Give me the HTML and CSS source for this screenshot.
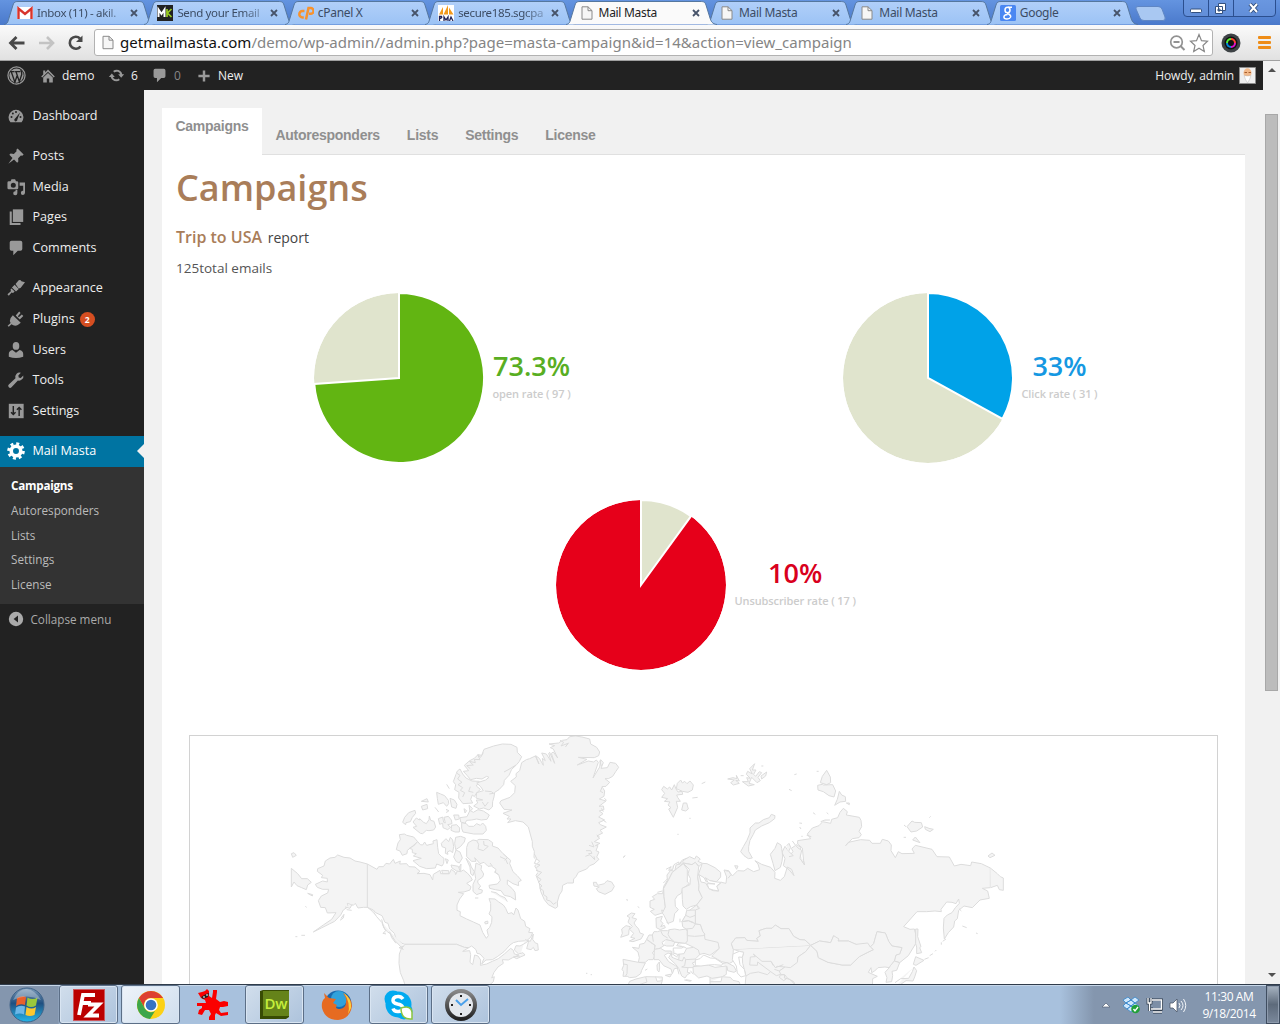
FILE: index.html
```html
<!DOCTYPE html>
<html lang="en">
<head>
<meta charset="utf-8">
<title>Mail Masta</title>
<link rel="stylesheet" href="styles.css">
</head>
<body>
<svg width="0" height="0" class="defs">
  <defs>
    <linearGradient id="tabBlue" x1="0" y1="0" x2="0" y2="1"><stop offset="0" stop-color="#b1cff9"/><stop offset="1" stop-color="#9cc3f5"/></linearGradient>
    <linearGradient id="orb" x1="0" y1="0" x2="0" y2="1"><stop offset="0" stop-color="#7d9bb8"/><stop offset=".45" stop-color="#1f4f80"/><stop offset="1" stop-color="#25b7ea"/></linearGradient>
    <linearGradient id="rim" x1="0" y1="0" x2="0" y2="1"><stop offset="0" stop-color="#888"/><stop offset="1" stop-color="#222"/></linearGradient>
    <symbol id="tab" viewBox="0 0 152 25"><path d="M0 24.5C4 24 4 21 5 18L9 5C10 2 11 1.500 14 1.500H134C138 1.500 139 2 140 5L144 18C145 21 146 24 151 24.500" stroke="#55779f" stroke-width="1"/></symbol>
    <symbol id="page" viewBox="0 0 12 14"><path d="M1 .8H7L11 4.600V13.200H1Z" fill="#f6f6f6" stroke="#8a8a8a"/><path d="M7 .8V4.700H11" fill="none" stroke="#8a8a8a"/></symbol>
    <symbol id="x" viewBox="0 0 8 8"><path d="M1 1L7 7M7 1L1 7" stroke="#47546a" stroke-width="1.800"/></symbol>
    <symbol id="bubble" viewBox="0 0 20 20"><path d="M5 2h10q2 0 2 2v7q0 2-2 2h-3l-5 5v-5H5q-2 0-2-2V4q0-2 2-2z"/></symbol>
  </defs>
</svg>

<header class="tabstrip">
  <div class="tabs">
    <div class="tab"><svg class="tab-bg"><use href="#tab"/></svg>
      <svg class="fav" viewBox="0 0 16 16"><path fill="#fff" d="M0 2h16v12H0z"/><path d="M1.500 14V3.500L8 9l6.500-5.500V14" fill="none" stroke="#d8342c" stroke-width="2.400"/></svg>
      <span class="name fade">Inbox (11) - akil.</span><svg class="close"><use href="#x"/></svg></div>
    <div class="tab"><svg class="tab-bg"><use href="#tab"/></svg>
      <svg class="fav" viewBox="0 0 16 16"><path fill="#222" d="M0 0h16v16H0z"/><path d="M1.500 12V4.500L4.500 9l3-4.500V12" fill="none" stroke="#fff" stroke-width="2"/><path d="M10 4v8M14.500 4l-4 4 4 4" fill="none" stroke="#9c2" stroke-width="1.700"/></svg>
      <span class="name fade">Send your Email</span><svg class="close"><use href="#x"/></svg></div>
    <div class="tab"><svg class="tab-bg"><use href="#tab"/></svg>
      <svg class="fav" viewBox="0 0 16 16"><path d="M6.500 6H4.500a3.200 3.200 0 0 0 0 6.400h1.300M8 14.500L10.500 3h2.200a2.700 2.700 0 0 1 0 5.800H11" fill="none" stroke="#f7922d" stroke-width="2.500"/></svg>
      <span class="name">cPanel X</span><svg class="close"><use href="#x"/></svg></div>
    <div class="tab"><svg class="tab-bg"><use href="#tab"/></svg>
      <svg class="fav" viewBox="0 0 16 16"><path fill="#fff" d="M0 0h16v16H0z"/><path d="M1 9.500L5 2v7.500zM5.500 9.500L10 0v9.500zM11 9.500V2.500l4.500 7z" fill="#f39a1c"/><path d="M1.500 16v-4.500h2q1 1.500-2 2.200M6 16v-4l2 3 2-3v4M11.500 16l1.500-4 2 4" fill="none" stroke="#225" stroke-width="1.300"/></svg>
      <span class="name fade">secure185.sgcpa</span><svg class="close"><use href="#x"/></svg></div>
    <div class="tab active"><svg class="tab-bg"><use href="#tab"/></svg><svg class="fav doc"><use href="#page"/></svg>
      <span class="name">Mail Masta</span><svg class="close"><use href="#x"/></svg></div>
    <div class="tab"><svg class="tab-bg"><use href="#tab"/></svg><svg class="fav doc"><use href="#page"/></svg>
      <span class="name">Mail Masta</span><svg class="close"><use href="#x"/></svg></div>
    <div class="tab"><svg class="tab-bg"><use href="#tab"/></svg><svg class="fav doc"><use href="#page"/></svg>
      <span class="name">Mail Masta</span><svg class="close"><use href="#x"/></svg></div>
    <div class="tab"><svg class="tab-bg"><use href="#tab"/></svg>
      <svg class="fav" viewBox="0 0 16 16"><rect width="16" height="16" rx="1.500" fill="#4a87f2"/><ellipse cx="7.500" cy="5" rx="2.500" ry="2.800" fill="none" stroke="#fff" stroke-width="1.500"/><path d="M8 2.200h4M7 8.500q3 .5 3.500 2.500M7.500 9.500C2.500 10 3 14 7 14s5-3.500 2-4.500" fill="none" stroke="#fff" stroke-width="1.400"/></svg>
      <span class="name">Google</span><svg class="close"><use href="#x"/></svg></div>
  </div>
  <svg class="newtab" viewBox="0 0 34 18"><path d="M4 1.500H24Q27 1.500 28 4L31 12Q32 15.500 29 15.500H10Q7 15.500 6 13L2 4Q1 1.500 4 1.500Z" fill="#a9c8f2" stroke="#5f86c4"/></svg>
  <svg class="winctl" viewBox="0 0 94 18"><path d="M.5 0V13Q.5 16.500 4 16.500H89Q92.500 16.500 92.500 13V0M25.500 0V16M50.500 0V16" fill="#6f9ae0" fill-opacity=".5" stroke="#2b4f8f"/><rect x="7.500" y="9" width="11" height="3.500" rx="1" fill="#fff" stroke="#33507f"/><path d="M35.500 3.500h7v7h-7zM32.500 6.500h7v7h-7zM35 9h2v2h-2z" fill="#fff" stroke="#33507f"/><path d="M67 4L74 12M74 4L67 12" stroke="#33507f" stroke-width="4"/><path d="M67 4L74 12M74 4L67 12" stroke="#fff" stroke-width="2"/></svg>
</header>

<div class="toolbar">
  <svg class="nav" viewBox="0 0 90 20"><path d="M17.500 10H4M9.500 4L3.500 10L9.500 16" fill="none" stroke="#484848" stroke-width="2.800"/><path d="M32 10H45M40 4L46 10L40 16" fill="none" stroke="#c3c3c3" stroke-width="2.600"/><path d="M73.500 13.500A6 6 0 1 1 73 5.500" fill="none" stroke="#484848" stroke-width="2.600"/><path d="M75.500 2.500V9H69Z" fill="#484848"/></svg>
  <div class="omnibox">
    <svg class="page-icon"><use href="#page"/></svg>
    <span class="url"><b>getmailmasta.com</b>/demo/wp-admin//admin.php?page=masta-campaign&amp;id=14&amp;action=view_campaign</span>
    <svg class="omni-icons" viewBox="0 0 40 20"><circle cx="7.500" cy="9" r="5.800" fill="none" stroke="#929292" stroke-width="1.700"/><path d="M4.500 9h6M11.500 13l4 4" stroke="#929292" stroke-width="2"/><path d="M30 1.500L32.500 7.700L38.500 8.200L34 12.500L35.300 18.500L30 15.200L24.700 18.500L26 12.500L21.500 8.200L27.500 7.700Z" fill="#fff" stroke="#888" stroke-width="1.200"/></svg>
  </div>
  <svg class="ext" viewBox="0 0 20 20"><circle cx="10" cy="10" r="9.500" fill="#3d4245"/><circle cx="10" cy="10" r="6.500" fill="#111"/><path d="M10 10V5A5 5 0 0 1 15 10Z" fill="#f43"/><path d="M10 10H15A5 5 0 0 1 10 15Z" fill="#d1c"/><path d="M10 10H5A5 5 0 0 1 10 5Z" fill="#5e3"/><path d="M10 10V15A5 5 0 0 1 5 10Z" fill="#08d"/><circle cx="10" cy="10" r="3" fill="#111"/></svg>
  <div class="menu"><i></i><i></i><i></i></div>
</div>

<div class="viewport">
  <div class="page">
    <div class="adminbar">
      <svg class="wp" viewBox="0 0 20 20"><circle cx="10" cy="10" r="9" fill="none" stroke="#999" stroke-width="1.300"/><circle cx="10" cy="10" r="7.500" fill="#999"/><path d="M3 6h5M8.500 6H14M4.500 6l3.800 11L10.500 10.500M9.500 6L13 16.500L15.500 9Q16 6.500 14.500 4" fill="none" stroke="#222" stroke-width="1.400"/></svg>
      <svg class="home" viewBox="0 0 20 20" fill="#999"><path d="M10 2l8.500 8.500-1.300 1.300L10 4.700l-7.200 7.100L1.500 10.500 4 8V3h2.500v2.500zM4 12l6-5.800L16 12v6h-4.500v-5h-3v5H4z"/></svg>
      <span class="t-demo">demo</span>
      <svg class="upd" viewBox="0 0 20 20" fill="#999"><path d="M10.200 3.300c3.200 0 5.800 2.200 6.600 5.100H19l-3.500 4.200L12 8.400h2.300A4.300 4.300 0 0 0 7.500 6.600L6 4.800a6.800 6.800 0 0 1 4.200-1.500zM9.800 16.800c-3.200 0-5.800-2.200-6.600-5.100H1l3.500-4.200L8 11.700H5.700a4.300 4.300 0 0 0 6.800 1.800l1.500 1.800a6.800 6.800 0 0 1-4.200 1.500z"/></svg>
      <span class="t-six">6</span>
      <svg class="com" fill="#999"><use href="#bubble"/></svg>
      <span class="t-zero">0</span>
      <svg class="plus" viewBox="0 0 20 20"><path d="M10 2v16M2 10h16" stroke="#999" stroke-width="3.500"/></svg>
      <span>New</span>
      <span class="howdy">Howdy, admin</span>
      <svg class="avatar" viewBox="0 0 17 17"><path d="M.5.500h16v16H.5z" fill="#eee" stroke="#8c8c8c"/><ellipse cx="8.500" cy="6" rx="4" ry="4.700" fill="#f2b98a"/><path d="M5 8.500Q8.500 9.500 12 8.500L10.500 12.500L8.500 16L6.500 12.500Z" fill="#fff" stroke="#bbb" stroke-width=".5"/><path d="M5.500 5.500h2.500M9.500 5.500H12" stroke="#a65f2f"/></svg>
    </div>
    <div class="body">
      <nav class="side">
        <a class="sep"><svg viewBox="0 0 20 20"><path d="M3.800 17h12.400A8.300 8.300 0 1 0 3.800 17z"/><g fill="#222"><circle cx="5" cy="11" r="1.100"/><circle cx="6.500" cy="7.300" r="1.100"/><circle cx="10" cy="5.500" r="1.100"/><circle cx="15" cy="11" r="1.100"/><path d="M14.500 6l-3 8a1.700 1.700 0 1 1-2.500-1.200z"/></g></svg>Dashboard</a>
        <a><svg viewBox="0 0 20 20"><path d="M10.400 3l1.400-1.400 6.700 6.700L17 9.700l-1.600-.3-3 3 .2 3.600-1.300 1.400-3.500-3.500L1.500 18.600l4.600-6.500-3.500-3.400 1.400-1.400 3.600.4 3-3z"/></svg>Posts</a>
        <a><svg viewBox="0 0 20 20"><path d="M12.500 11V5q0-1.500-1.500-1.500h-1L9 1.500H5L4 3.500H2Q.5 3.500.5 5v6q0 1.500 1.500 1.500h9q1.500 0 1.500-1.500zM7 5.200a2.800 2.800 0 1 1 0 5.600 2.800 2.800 0 0 1 0-5.600z" fill-rule="evenodd"/><path d="M14 5h6v11.500a2.300 2.300 0 1 1-2-2.300V8.500h-4zM11.500 13v4a2.300 2.300 0 1 1-2-2.300V13z"/></svg>Media</a>
        <a><svg viewBox="0 0 20 20"><path d="M6.500 1.500h11.500v14H6.500z"/><path d="M3 4h2.300v12.800H15V19H3z"/></svg>Pages</a>
        <a class="sep"><svg viewBox="0 0 20 20"><use href="#bubble"/></svg>Comments</a>
        <a><svg viewBox="0 0 20 20"><path d="M9.500 5.500L13 1.500q2-1 3 1l4 1-5 6.500-2 .5zM8.500 6.500l4.500 4.500-3 3-4.500-4.500zM5 10.500l3.500 3.500-1.800 1.500-1.700-.5L2 18.500.5 17l3.800-3.500-.3-2z"/></svg>Appearance</a>
        <a><svg viewBox="0 0 20 20"><path d="M13.100 9.400L9.700 6l3.800-4.200 1.600 1.500-3 3.700 1 1L16.500 5l1.600 1.600-3.900 4zM4 9l2.500-3.200 8.800 8.500-3.300 2.500q-4 1.500-7-1L2 18.700.7 17.500 4 14.500Q2.500 12 4 9z"/></svg>Plugins <em>2</em></a>
        <a><svg viewBox="0 0 20 20"><ellipse cx="10" cy="5.500" rx="3.700" ry="4.300"/><path d="M6 10l4 3 4-3q4 1 4 4.500v3q-8 3-16 0v-3Q2 11 6 10z"/></svg>Users</a>
        <a><svg viewBox="0 0 20 20"><path d="M16.700 9.300q-2 2-4.600 1.300L5 18q-1.500 1.500-3 0t0-3l7.400-7q-.7-3 1.300-5T15.400 2L12.600 5l.4 2.300 2.300.4 2.800-2.800q.6 2.500-1.400 4.400z"/></svg>Tools</a>
        <a class="sep"><svg viewBox="0 0 20 20"><path d="M2 2h16.500v16H2z"/><path d="M7 4.500v9M4.500 11.500L7 14l2.500-2.500M13.500 15.500V6M11 8.500L13.500 6 16 8.500" stroke="#222" stroke-width="1.600" fill="none"/></svg>Settings</a>
        <a class="current"><svg viewBox="0 0 20 20"><circle cx="10" cy="10" r="5.300" fill="none" stroke="#fff" stroke-width="4"/><circle cx="10" cy="10" r="8.300" fill="none" stroke="#fff" stroke-width="3" stroke-dasharray="3.300 3.218"/></svg>Mail Masta</a>
        <div class="sub"><b>Campaigns</b><span>Autoresponders</span><span>Lists</span><span>Settings</span><span>License</span></div>
        <div class="collapse"><svg viewBox="0 0 20 20"><circle cx="10" cy="10" r="9"/><path d="M12.500 5.500v9L7 10z" fill="#222"/></svg>Collapse menu</div>
      </nav>
      <main>
        <div class="subtabs"><span class="on">Campaigns</span><span>Autoresponders</span><span>Lists</span><span>Settings</span><span>License</span></div>
        <section class="panel">
          <h1>Campaigns</h1>
          <p class="trip"><b>Trip to USA</b> report</p>
          <p class="total">125total emails</p>
          <div class="charts">
            <div class="chart green"><svg viewBox="-86 -86 172 172"><circle r="85" fill="#e0e4cd"/><path d="M0 0V-85A85 85 0 1 1 -84.700 6Z" fill="#62b512" stroke="#fff" stroke-width="2"/><circle r="85.500" fill="none" stroke="#fff"/></svg><div><strong>73.3%</strong><small>open rate ( 97 )</small></div></div>
            <div class="chart blue"><svg viewBox="-86 -86 172 172"><circle r="85" fill="#e0e4cd"/><path d="M0 0V-85A85 85 0 0 1 74.500 40.900Z" fill="#00a2e8" stroke="#fff" stroke-width="2"/><circle r="85.500" fill="none" stroke="#fff"/></svg><div><strong>33%</strong><small>Click rate ( 31 )</small></div></div>
          </div>
          <div class="charts second">
            <div class="chart red"><svg viewBox="-86 -86 172 172"><circle r="85" fill="#e6001a"/><path d="M0 0V-85A85 85 0 0 1 50 -68.800Z" fill="#e0e4cd" stroke="#fff" stroke-width="2"/><circle r="85.500" fill="none" stroke="#fff"/></svg><div><strong>10%</strong><small>Unsubscriber rate ( 17 )</small></div></div>
          </div>
          <div class="map">
            <svg width="1027" height="248" viewBox="0 0 1027 248">
              <g transform="translate(90 -6) scale(.33333)">
                <!-- Alaska, Canada, United States -->
                <path d="M262 402L240 396L225 393L210 384L192 382L173 375L165 382L150 384L136 393L132 408L113 416L112 424L128 436L124 443L142 445L142 456L128 453L106 463L112 472L128 478L146 478L143 489L124 498L115 512L122 532L136 533L142 549L168 548L155 568L130 585L100 606L124 594L148 582L164 574L182 555L190 540L205 530L202 520L220 526L226 520L234 534L250 532L262 532"/>
                <path d="M262 402L291 418L296 410L310 410L318 400L329 402L340 388L345 400L361 393L359 402L380 401L387 410L405 411L420 424L411 431L432 430L450 434L458 450L460 433L480 421L482 431L508 431L514 418L525 426L527 434L536 415L543 402L542 425L550 420L563 430L573 442L577 450L560 460L573 470L570 480L552 486L535 487L551 491L539 507L531 525L531 541L541 545L540 557L560 567L580 576L600 585L608 607L619 625L625 617L621 600L629 592L635 577L636 560L627 552L632 540L632 520L627 506L645 507L655 515L670 525L677 535L684 551L696 548L701 555L708 534L714 540L722 566L734 574L737 589L750 596L746 607L758 608L752 622L740 632L715 634L700 638L690 645L672 665L652 680L637 689L618 690L605 702L612 685L600 672L591 670L588 659L575 648L566 653L553 652L530 643L375 643L366 640L348 626L343 610L329 597L324 580L315 577L306 557L287 548L280 540L262 532Z"/>
                <path d="M375 643H530L553 652L566 653L548 664L569 662L572 674L570 697L578 704L584 675L594 678L602 690L601 706L620 702L637 694L655 686L673 672L692 655L700 661L703 672L717 675L698 683L685 690L667 689L670 700L654 711L642 727L635 744L643 740L640 755L630 764L620 780H380L371 752L361 728L357 700L358 672L364 656Z"/>
                <path d="M262 532L280 545L290 560L306 578L312 595L322 605L332 612L345 632L370 658L357 653L372 648M305 568L310 588L317 602L309 610L318 612M329 605L335 623L348 640M183 565L192 553L190 564L180 571M195 531L210 535L216 523M200 539L215 541"/>
                <path d="M735 629L751 634L760 612L758 628L766 639L773 641L775 660L765 662L760 652L753 659L740 656L743 645L746 632L735 640L720 648L708 647L703 660L716 672L729 668L735 675L710 686L700 681L720 678"/>
                <path d="M34 415L53 431L65 446L82 446L94 457L83 465L79 479L65 473L51 467L42 456L34 471ZM34 371L42 368L49 376L38 382ZM83 490L98 494L97 498ZM46 620H52M64 616H75M76 529L80 532"/>
                <!-- Arctic archipelago -->
                <path d="M358 314L373 312L380 316L401 321L413 335L396 350L382 361L381 371L367 376L360 363L349 359L354 339L361 329Z"/>
                <path d="M413 335L421 344L428 345L434 336L440 346L460 341L459 333L471 329L473 352L476 371L484 379L492 385L491 400L486 408L470 402L466 414L440 416L419 409L399 392L424 385L400 378L409 371L397 368L397 358L388 355L401 348Z"/>
                <path d="M484 340L498 326L506 335L511 322L518 330L521 350L518 368L510 362L502 366L504 373L496 370L497 354L486 350ZM527 322L542 319L556 324L553 336L541 350L527 359L524 340Z"/>
                <path d="M528 360L540 366L547 384L538 399L529 395L521 381ZM496 386L505 390L501 401ZM485 421L506 422L507 431H488ZM513 405L535 409L541 425L530 423L516 414Z"/>
                <path d="M405 241L407 250L397 262L391 275L378 278L377 284L368 277L374 262L386 248ZM399 276L409 264L418 270L419 266L431 277L439 281L447 269L448 258L452 271L462 274L467 291L461 300L447 302L439 301L428 311L421 310L399 292L410 289Z"/>
                <path d="M470 187L482 192L494 197L505 211L506 221L500 229L490 218L475 223L472 205ZM510 205L523 210L531 223L528 235L515 231ZM424 214L441 206L445 216ZM424 229L441 223L443 236L428 240ZM500 163L508 176M465 232L476 246M498 238L507 242L499 248"/>
                <path d="M475 266L488 261L491 277L496 279L492 262L505 259L514 270L516 281L503 284L512 292L503 299L489 293L488 280L479 283ZM515 286L530 284L539 294L538 306H525L513 301ZM521 255H536L538 267L526 270ZM540 263L561 260L570 241L580 247L594 239L610 243L628 255L621 268L604 270L590 267L575 270L560 271L555 280L542 276Z"/>
                <path d="M545 278L559 281L566 289L581 289L590 281L601 286L608 279L617 289L619 301L609 312H581L549 306L545 295ZM552 236L560 242L555 249ZM567 226L578 236L570 244Z"/>
                <path d="M524 144L532 123L540 117L548 132L558 144L576 153L598 154L589 168L601 178L589 190L583 200L577 195L572 208L578 219L549 221L536 204L537 187L524 179L527 164L520 155Z"/>
                <path d="M553 106L569 92L583 85L594 74L605 76L612 58L641 48L667 42L693 43L711 52L712 67L725 80L718 94L710 104L695 118L687 136L673 151L671 164L657 179L644 187L642 201L638 215L637 231L627 240L611 234L598 237L581 228L593 219L589 210L608 210L588 204L590 188L610 182L602 170L590 159L617 150L627 142L620 139L606 147L589 145L572 149L561 136L550 124L566 122Z"/>
                <path d="M565 338L579 330L590 332L597 328L625 329L638 338L637 348L654 354L668 370L692 391L689 401L695 415L699 425L712 437L724 451L715 456L716 467L699 461L682 450L682 463L697 476L705 487L707 510L691 500L673 496L663 482L646 479L629 475L627 466L652 462L661 451L656 434L646 427L648 418L634 408L624 409L612 397L600 401L584 383L588 394L575 394L560 380L560 352Z"/>
                <path d="M558 385L569 397L574 411L583 425L579 437L572 431L570 411ZM588 399L605 407L603 418L611 432L608 441L593 452L594 460L602 468L595 477L607 480L606 488L590 494L579 484L579 463L587 446L584 426ZM585 504H595M614 576L623 573L624 580L616 582ZM590 332L596 343L594 357L610 362L625 349L612 345L611 333M633 485L648 488L660 497L675 503L682 515M637 408L630 399M642 425L655 434"/>
                <!-- Greenland, Iceland -->
                <path d="M659 219L663 212L690 202L704 188L706 167L692 154L709 141L708 131L719 122L725 98L739 89L749 86L766 78L777 102L767 77L778 85L790 106L787 85L796 92L785 69L799 72L813 94L806 70L809 67L824 100L814 70L820 66L833 84L820 57L811 53L824 47L807 42L836 39L847 31L861 29L869 20L887 18L906 21L929 27L932 42L950 52L959 66L956 77L943 83L895 82L921 88L892 105L925 93L941 96L949 90L955 97L939 144L959 111L962 89L970 98L963 115L982 113L990 97L1007 100L1016 112L1007 125L998 139L985 146H975L989 157L978 169L966 170L974 183L972 199L958 207L978 213L957 229L970 228L972 239L958 243L969 251L956 261L974 270L956 278L961 284L979 291L960 301L968 309L951 318L959 325L943 335L960 340L946 347H954L948 362L957 366L950 381L957 388L942 402L929 407L920 417L895 427L888 440L881 447L880 459L862 459L848 466L846 483L838 495L832 516L833 530L826 535L805 524L793 509L782 484L778 461L768 436L775 426L764 408L779 393L762 383L763 364L757 349L757 335L745 291L729 276L706 272L683 278L693 267H681L688 259L669 250L696 240L672 238Z"/>
                <path d="M940 457H949L953 466L973 461L981 452L995 456L1003 469L996 482L975 493L955 485L949 476L958 471L942 468ZM959 92L964 108M967 170L961 184L969 188M973 205L980 211M964 235L970 245M968 270L979 277M950 315L959 321M935 335L942 351L927 346M918 362L932 362L936 370L925 371M916 379L930 374L944 389L942 379M763 372L770 385L763 400L780 405L769 413M768 421L785 427L771 440L783 448L776 458L786 468L779 474L790 482L791 494L801 501L800 510L811 513L820 523L829 517M840 31L851 37L843 48L864 40L857 50L866 38M1030 383L1036 377M1040 510L1043 512M918 730H922M932 734H936"/>
                <path d="M528 128L540 136L533 147L546 157L534 164L548 173L541 181L554 188L548 201M571 170L566 184L580 187M610 68L602 82L593 74L600 89L583 88L586 98L568 94L580 105L560 107L571 116M708 105L687 118L672 126M615 183L634 185L641 190L628 192M607 216L615 229L625 216M660 380L677 388L683 402M670 372L682 383L674 391"/>
              </g>
              <g transform="translate(410 -6) scale(.33333)">
                <!-- Ukraine, Belarus and the steppe -->
                <path d="M246 575L263 545L290 525L330 600L356 640L358 655L330 676L312 670L297 674L281 652L256 640L262 600Z"/>
                <path d="M400 658L632 646L617 665L594 681L590 770H435L438 736L428 700L427 682L431 667L418 664Z"/>
                <!-- British Isles and western Europe -->
                <path d="M94 549L105 551L96 563L110 567L102 579L107 587L116 597L120 609L131 613L123 627L99 635L88 633L105 625L92 622L101 610L89 598L97 589L84 577L89 563L81 558ZM65 597L78 587L91 590L87 600L86 614L62 622L67 610Z"/>
                <path d="M97 652L117 655L119 643L133 640L140 628L152 638L164 645L166 658L157 669L165 677L159 689L145 689L136 697L115 697L118 683L114 666Z"/>
                <path d="M69 688L115 697L136 699L125 721L122 731L108 741L89 743L82 739H69L71 725L66 718L71 706ZM70 702L82 704L81 731L76 739"/>
                <path d="M140 628L147 615H157L162 605L173 605L181 602H203L208 599L224 597L239 600L258 597L262 604V633L256 639L236 639L224 636L198 629L186 637L191 648L175 657L163 658L166 646Z"/>
                <path d="M163 658L182 655L195 663L214 663L215 672L204 669L193 676L206 695L226 707L234 714L223 716L217 731L213 717L191 707L177 689H162ZM196 736L215 732L210 741ZM171 705L178 696L179 714L177 726L172 721ZM135 721L142 717"/>
                <path d="M198 629L213 632L224 636L220 648L200 648L191 645M220 654L246 654L251 650L260 655L281 652L295 660L299 674L287 686L289 694L277 699L287 713H264L262 727L271 729L262 734L255 744L245 738L236 715L227 703L206 683L214 670L229 680L238 673L236 690L247 693L252 681L257 689L254 707L245 711M220 654L219 669L233 673L252 671L260 655M257 689L287 687M245 711L264 713M213 664L216 682L236 690"/>
                <path d="M208 599L204 613L210 624L224 636L256 640L262 633M182 602L188 615L203 624M157 615L160 635M236 639L230 647L251 651"/>
                <path d="M89 754L108 747L137 740L187 741V752L181 770H82ZM137 741L141 756L117 764M167 740L171 754L187 752M257 749L275 752M330 742L341 740H365L391 742L399 751L417 755L421 765V775H330ZM330 755H363L366 741"/>
                <!-- Scandinavia -->
                <path d="M150 513L164 508L157 500L172 491H188L191 469L202 451L201 435L212 421L224 424L228 405L243 401L252 390L269 380L284 387L289 378L301 387L294 394L307 400L297 409L286 397L276 404L250 399L232 415L217 427L206 449L191 475L192 500L196 531L193 543L185 540L187 549L165 556L151 544L163 538L150 532Z"/>
                <path d="M250 401L262 418V456L268 461L249 475L244 490L232 497L225 509L226 529L235 539L224 551L220 574L204 580L192 556L187 549L196 531L192 500L191 475L206 449L217 427L232 415Z"/>
                <path d="M246 475L270 464L271 445L264 432L268 418L249 399L276 404L286 397L296 410L293 440L297 466L296 480L307 503L290 525L272 530L259 538L249 528L247 508Z"/>
                <path d="M168 564L187 559L182 573L189 580L182 590L193 586L196 593L181 599L169 593ZM199 576L207 583M198 418L213 410L206 421L218 419L222 404L236 396L237 404L247 390L262 384M190 459L203 446M172 487L187 483M240 566V577"/>
                <path d="M185 179L191 169L202 177L209 171L215 180L223 164L228 177L234 186L246 184L248 193L230 195L233 202L241 214L229 214L233 232L220 262L206 237L213 233L204 225L210 216L193 214L203 206L185 202L194 190ZM232 160L242 150L247 159L254 154L261 161L270 153L280 165L277 180L264 187L247 184L229 176ZM250 219H260L265 237L257 243L245 240ZM268 265H272M305 161L316 156M277 204L293 202M232 313H236M69 382L75 377M79 509H83M113 530L118 533"/>
                <!-- Russia -->
                <path d="M307 400L321 401L345 413L362 427V441L350 455L328 452L319 456L312 443L297 434L303 456L317 459L327 476L339 482L356 483L350 470L364 457L378 460L380 441L372 420L386 422L397 438L413 422L432 423L443 415L461 425L479 419L474 402L465 392L485 403L512 412L525 427L524 445L541 451L553 440L562 411L575 418L582 437L567 419L550 407L555 386L546 367L555 349L572 373L579 365L574 355L590 344L602 352L601 385L612 403L607 354L593 342L593 332L632 326L622 312L637 294L657 287L668 275L692 280L695 268L713 263L720 247L730 235L742 245L739 255L778 262L783 271L785 290L777 304L784 314L777 323L757 326L737 347L745 337L782 329L809 331L816 340H841L847 328L865 333L874 345L873 362L886 383L895 365L906 371L943 370L936 357L946 346L996 358L1011 380L1048 381L1063 408L1083 403L1112 407L1115 396L1144 401L1171 414V473L1147 475L1163 483L1168 505L1140 510L1117 533L1092 528L1076 541L1072 566L1064 573L1061 591L1045 608L1033 627L1030 594L1032 565L1042 555L1056 548L1066 533L1078 520L1076 507L1068 521L1056 517L1040 516L1023 538L1024 545L1005 543L980 545H951L911 590L930 598L943 597L949 620L947 641L925 677L899 698L883 693L888 675L899 672L906 653L876 648L866 634L856 609L831 605L821 641L811 651L768 643L745 633L714 633L701 617L692 638L659 633L632 646L615 630L600 629L581 619L567 596L543 596L526 585L516 595H498L477 602L481 618L470 625L475 634L440 631L435 623L407 624L394 641L400 658L398 695L389 700L365 695L344 683L335 678L358 655L354 637L315 628L313 611L308 604L301 584L286 582L286 540L299 535L290 525L307 503L296 480L297 466L293 440Z"/>
                <path d="M511 373L525 355L532 338L543 345L545 355L548 378L546 394L541 412L525 422L519 400ZM560 347L567 340L572 352L566 364L580 377L567 380M577 333L586 345L594 354L605 361L600 385L614 405L610 391"/>
                <path d="M422 365L430 350L441 331L450 309V294L466 279H477L490 269L508 263L514 253L525 257L524 266L508 278L485 288L466 300L460 313L450 331L446 350V364L457 384L445 386L432 377ZM376 422L386 424L393 434L384 445M404 407L414 408L410 418Z"/>
                <path d="M667 139L680 121L691 141L692 158L680 164L661 158ZM670 165L698 164L707 183L702 201L687 197L670 185L654 180L653 166L667 163ZM718 184L725 195L736 200L737 214L720 216L704 226L712 208ZM739 219H748V224ZM650 124H656M583 134L590 132M567 178L575 182M598 279L606 280M599 291L603 297M604 319H608M639 248L646 253M680 248L685 252M662 275L675 270L690 270M620 316L634 320"/>
                <path d="M383 147L399 143L411 146L409 136L418 153L407 151L418 160L400 165L392 158L403 150ZM427 155L445 155L440 143L451 145L439 133L443 124L457 132L449 116L464 101L457 120L468 120L461 133L467 139L478 125L485 128L474 142L481 152L471 158L455 142L447 160L463 164L445 168ZM483 138L500 126L497 138L485 147ZM484 108H490M422 137H431"/>
                <path d="M921 290L936 273L944 277L964 278L968 291L950 303L933 306ZM912 285L918 290M974 290L987 295L1000 298L990 305L976 298ZM938 330L946 321L960 338ZM911 322H918M988 263L992 259M1164 378L1176 369L1185 376L1170 383ZM1171 414L1192 431L1201 440L1210 444V481L1198 479L1192 466L1172 473"/>
                <path d="M947 597H954L953 620L963 650L959 653L965 668L950 671V651L947 641ZM947 680L972 691L948 706L940 703ZM973 688L986 683M989 677L999 671M1005 664L1009 660M1024 644V637M1028 634L1038 627M1084 543L1077 536M1087 588L1100 593M1128 609L1133 611"/>
                <!-- Eastern Europe and central Asia -->
                <path d="M246 575L265 572L280 577L286 582L301 584L308 604L315 613L309 617L284 619L262 617V600ZM260 541L286 540L286 582L265 572L246 575L257 556Z"/>
                <path d="M257 556L270 562L286 556M246 575L248 590L258 597L278 595L286 582"/>
                <path d="M400 658L394 641L407 624L435 623L440 631L475 634L470 625L481 618L477 602L498 595H516L526 585L543 596L567 596L581 619L600 629L615 630L632 646"/>
                <path d="M451 681L449 705L472 706L473 696L512 725L502 734L475 726L451 730L438 738M451 681L466 680L460 672L486 694H513L526 713L550 704M526 713L532 709L555 711L538 723L523 718M513 694L520 707M512 725L529 737L542 733L538 742L551 752L562 744L581 755M543 735L554 734L553 744L570 748L590 770"/>
                <path d="M279 710L302 707L325 705L345 712L379 708L379 733L367 740L336 745L321 738L296 744L280 729ZM361 702L381 698L402 709L409 723L402 727L383 722L381 709M253 750L272 754M232 714L237 733M271 722L280 733"/>
                <path d="M632 646L651 664L655 683L684 697L726 705L752 705L778 680L820 659L811 651L821 641L831 605L856 609L866 634L876 648L906 653L899 672L888 675L883 693L868 713L855 711L834 713L824 723L815 728L813 713L805 727L832 739L818 746L817 775H590L581 755L562 744L554 734L542 733L538 723L555 711L571 713L592 697L594 681L617 665Z"/>
                <path d="M632 646L659 633L692 638L701 617L717 627L714 633L745 633L768 643L803 639L811 651L820 659L803 667L778 680L752 705L726 705L684 697L655 683L651 664Z"/>
                <path d="M871 707L883 693L899 698L890 721L876 724L878 737L875 755L858 757L861 743L855 727L868 713ZM942 711L950 722L944 741L939 753L918 752L901 764L887 770M885 758L902 746L926 745L937 725L942 711"/>
              </g>
              <g class="water" transform="translate(410 -6) scale(.33333)"><path d="M286 690L300 686L311 675L331 684L345 685L368 700L365 706L343 704L325 705L303 708L286 707ZM399 672L418 664L431 667L427 682L416 681L420 704L433 718L437 737L423 741L412 729L409 708L397 689ZM325 459L316 443L330 452L350 456L364 457L350 468L356 483L340 480L327 476L321 461L345 462Z"/></g>
            </svg>
          </div>
        </section>
      </main>
    </div>
  </div>
  <div class="scroll"><i class="up"></i><i class="thumb"></i><i class="down"></i></div>
</div>

<footer class="taskbar">
  <div class="task start"><svg viewBox="0 0 36 36"><circle cx="18" cy="18" r="17" fill="url(#orb)" stroke="#3e6288"/><path d="M8 11q5-3 9-1l-1 8q-5-2-9 1z" fill="#e8602c"/><path d="M18.500 10.500q5 3 10 0l-1.500 8q-5 3-9.500 0z" fill="#9bc83c"/><path d="M7 20.500q4-3 9-1l-1 8q-4-2-9 0z" fill="#6cb7e8"/><path d="M17.500 20q5 3 9.500 0l-1.500 8q-5 2-9 0z" fill="#fcc82f"/><path d="M4 13Q10 1 18 2T32 13Q18 6 4 13z" fill="#fff" opacity=".3"/></svg></div>
  <div class="task open"><svg viewBox="0 0 32 32"><path d="M0 0h32v32H0z" fill="#b00"/><path d="M.5.500h31v31H.5z" fill="none" stroke="#d8aebb" stroke-dasharray="1 1"/><path d="M6 26L10 6H22M9 14H18M15 15.500H26L15 26.500H26" fill="none" stroke="#fff" stroke-width="3.800"/></svg></div>
  <div class="task open bright"><svg viewBox="-16 -16 32 32"><circle r="14" fill="#fcd116"/><path d="M-12.100-7A14 14 0 0 1 12.100-7H0A7 7 0 0 0-6.100 3.500Z" fill="#dd4031"/><path d="M-12.100-7L-6.100 3.500A7 7 0 0 0 4 6L-1 14A14 14 0 0 1-12.100-7Z" fill="#3da64a"/><circle r="6.800" fill="#fff"/><circle r="5.300" fill="#3872c4"/></svg></div>
  <div class="task"><svg viewBox="0 0 32 32"><path d="M1 4L5 3L8 2L10 0L12 2L12 7L15 9L16 3L16 1H20L20 3L19 10L23 13L27 12L31 13L31 17L26 18L23 18L22 21L24 24L31 23L31 26L24 27L19 24L18 26L18 31L12 31L12 28L14 25L12 21L8 21L5 26L1 25L2 21L5 19L5 17L0 17L0 14L5 14L9 14L8 11L4 9Z" fill="#fb0000"/><path d="M4 8L9 5L12 4L11 8L6 10Z" fill="#222"/><path d="M6 8h2M9 6h2" stroke="#fff"/></svg></div>
  <div class="task open"><svg viewBox="0 0 32 32"><path d="M1 2L4 1H30V28L27 30H1Z" fill="#384c04"/><path d="M4 2h26v25H4z" fill="#65831a"/><text x="17" y="20" text-anchor="middle" class="dw">Dw</text></svg></div>
  <div class="task"><svg viewBox="0 0 32 32"><circle cx="17" cy="15" r="13.500" fill="#1969ae"/><circle cx="18" cy="10" r="8" fill="#30a2dc"/><path d="M3 4L8 9L15 10L12 14L16 16Q13 20 19 20Q25 19 25 13Q26 9 22 4Q31 9 31 17Q29 30 17 31Q4 31 1 19Q0 12 4 9Z" fill="#e66b21"/><path d="M23 4Q31 10 30 19L27 25Q30 14 23 4Z" fill="#fbce3a"/></svg></div>
  <div class="task open"><svg viewBox="0 0 32 32"><circle cx="10" cy="10" r="8.500" fill="#00aaf0"/><circle cx="21" cy="22" r="8.500" fill="#00aaf0"/><circle cx="15.500" cy="15.500" r="13" fill="#00aaf0"/><path d="M20 10Q18 7 14.500 7.500Q10 8 10 11.500Q10 14 14.500 15Q20 16 20 19.500Q19 23 14.500 22.500Q11 22.500 10 19.500" fill="none" stroke="#fff" stroke-width="3.500"/><path d="M18 19Q28 16 29 23V30Q18 31 18 19Z" fill="#fff" stroke="#8bc53f" stroke-width="1.500"/></svg></div>
  <div class="task open"><svg viewBox="-16 -16 32 32"><circle r="14" fill="#e3e7ec" stroke="url(#rim)" stroke-width="4"/><path d="M0-10V-8M0 10V8M-10 0H-8M10 0H8" stroke="#222" stroke-width="2"/><path d="M-5-5L0 0L7-6" fill="none" stroke="#4aa0ea" stroke-width="2"/></svg></div>
  <div class="tray">
    <svg viewBox="0 0 90 20"><path d="M1 12L5 8L9 12Z" fill="#fff" stroke="#536175" stroke-width=".7"/><g fill="#cfe7fc" stroke="#3385cc" stroke-width=".8"><path d="M22 5L27 2L30 5L25 8ZM30 5L34 2L38 5L34 8ZM22 11L25 8L30 11L26 14ZM30 11L34 8L38 11L34 14ZM25 8L30 5L34 8L30 11ZM26 14L30 11L34 14L30 17Z"/></g><circle cx="34.500" cy="14" r="4.300" fill="#21a038"/><path d="M32.500 14l1.500 2 3-4" fill="none" stroke="#fff" stroke-width="1.300"/><path d="M51 5H60.500V14H50M52 17H61M47 3V8H50V3M48.500 8V16" fill="none" stroke="#2d3b4c" stroke-width="2.800"/><path d="M52 6H60V13.500H52Z" fill="#7c8ea6"/><path d="M51 5H60.500V14H50M52 17H61M47 3V8H50V3M48.500 8V16" fill="none" stroke="#fff" stroke-width="1.300"/><path d="M69 8H72L76 4V17L72 13H69Z" fill="#fff" stroke="#3f4c5c" stroke-width=".7"/><path d="M78 8Q80 10.500 78 13M80 6Q84 10.500 80 15M82.500 4Q87 10.500 82.500 17" fill="none" stroke="#f4f7fa"/></svg>
    <div class="clock"><span>11:30 AM</span><span>9/18/2014</span></div>
    <i class="peek"></i>
  </div>
</footer>
</body>
</html>
```
FILE: styles.css
```css
* { box-sizing: border-box; }
body { margin: 0; width: 1280px; height: 1024px; overflow: hidden; display: flex; flex-direction: column; font-family: "Open Sans", "Noto Sans", sans-serif; background: #f1f1f1; }
svg { display: block; flex: none; }
.defs { position: absolute; }

/* Browser tab strip */
.tabstrip { height: 25px; flex: none; display: flex; background: linear-gradient(#6494e0, #4a79cb); font-size: 12px; font-family: "Noto Sans", "Open Sans", sans-serif; }
.tabs { display: flex; padding-left: 4px; }
.tab { position: relative; width: 140.4px; height: 25px; display: flex; align-items: center; padding-left: 13px; color: #3c4c64; }
.tab-bg { position: absolute; left: 0; top: 0; width: 152px; height: 25px; fill: url(#tabBlue); }
.tab.active { z-index: 2; color: #222; }
.tab.active .tab-bg { fill: #fafafa; }
.fav { position: relative; width: 16px; height: 16px; margin-right: 4px; }
.fav.doc { width: 12px; height: 14px; margin: 0 6px 0 2px; }
.name { position: relative; width: 87px; white-space: nowrap; font-size: 12px; line-height: 20px; letter-spacing: -.3px; }
.fade { font-size: 11.5px; letter-spacing: -.35px; -webkit-mask-image: linear-gradient(90deg, #000 75%, rgba(0,0,0,.3)); mask-image: linear-gradient(90deg, #000 75%, rgba(0,0,0,.3)); }
.close { position: relative; width: 8px; height: 8px; margin-left: 6px; }
.newtab { width: 34px; height: 18px; margin: 5px 0 0 7px; }
.winctl { width: 94px; height: 18px; margin-left: auto; margin-right: 3px; }

/* Address bar */
.toolbar { height: 36px; flex: none; display: flex; align-items: center; background: linear-gradient(#fafafa, #e1e1e1); border-bottom: 1px solid #a0a0a0; padding: 0 8px 0 7px; }
.nav { width: 90px; height: 20px; margin-right: -3px; }
.omnibox { width: 1119px; height: 27px; background: #fff; border: 1px solid #b2b2b2; border-radius: 3px; display: flex; align-items: center; padding: 0 3px 0 7px; }
.page-icon { width: 12px; height: 15px; margin-right: 6px; }
.url { font-size: 15px; color: #858585; white-space: nowrap; font-family: "Noto Sans", sans-serif; letter-spacing: .02px; line-height: 20px; margin-bottom: 2px; }
.url b { font-weight: 400; color: #111; }
.omni-icons { width: 40px; height: 20px; margin-left: auto; }
.ext { width: 20px; height: 20px; margin-left: 8px; }
.menu { display: flex; flex-direction: column; gap: 2px; width: 13px; margin-left: 17px; }
.menu i { height: 3px; background: #ee8c16; border-radius: 1px; }

.viewport { flex: 1; min-height: 0; display: flex; overflow: hidden; }
.page { width: 1263px; flex: none; display: flex; flex-direction: column; }
.scroll { width: 17px; background: #f1f1f1; display: flex; flex-direction: column; align-items: center; }
.up, .down { border: 4px solid transparent; }
.up { border-bottom-color: #505050; margin-top: 3px; }
.down { border-top-color: #505050; margin: auto 0 3px; }
.thumb { width: 13px; height: 577px; margin-top: 42px; margin-right: 1px; background: #bcbcbc; border: 1px solid #a8a8a8; }

/* Admin bar */
.adminbar { height: 29px; flex: none; background: #222; color: #eee; display: flex; align-items: center; padding: 0 7px; font-size: 12px; }
.wp { width: 19px; height: 19px; }
.home { width: 16px; height: 16px; margin-left: 14px; }
.t-demo { margin-left: 6px; width: 32px; }
.upd { width: 17px; height: 17px; margin-left: 14px; }
.t-six { margin-left: 6px; width: 7px; }
.com { width: 17px; height: 17px; margin-left: 13px; }
.t-zero { margin-left: 6px; width: 7px; color: #888; }
.plus { width: 14px; height: 14px; margin: 0 7px 0 16px; }
.howdy { margin-left: auto; margin-right: 5px; letter-spacing: -.15px; }
.avatar { width: 17px; height: 17px; }

/* Sidebar */
.body { flex: 1; min-height: 0; display: flex; }
.side { width: 144px; flex: none; background: #222; padding-top: 10.8px; color: #eee; font-size: 12.6px; }
.side a { height: 30.6px; display: flex; align-items: center; padding: 0 0 1.7px 7px; }
.side svg { width: 18px; height: 18px; fill: #999; margin-right: 7.5px; }
.side a > svg { position: relative; top: .5px; }
.side a.sep { margin-bottom: 9.8px; }
.side em { font: 700 8.500px/15px "Open Sans", sans-serif; width: 15px; height: 15px; border-radius: 50%; background: #d54e21; color: #fff; text-align: center; margin: 2px 0 0 5px; }
.side a.current { background: #0074a2; color: #fff; position: relative; height: 31px; padding-bottom: 2.500px; }
.current::after { content: ""; position: absolute; right: 0; top: 8px; border: 7px solid transparent; border-right-color: #f1f1f1; border-left: 0; }
.side a.current svg { fill: #fff; }
.sub { background: #333; padding: 6px 0 7px 11px; height: 137px; font-size: 11.7px; color: #bbb; display: flex; flex-direction: column; }
.sub > * { height: 24.700px; line-height: 24.700px; }
.sub b { color: #fff; font-weight: 700; letter-spacing: -.25px; }
.collapse { display: flex; align-items: center; height: 30px; padding-left: 8px; font-size: 11.7px; color: #aaa; white-space: nowrap; }
.side .collapse svg { width: 16px; height: 16px; fill: #aaa; margin-right: 6.500px; }

/* Content */
main { flex: 1; min-width: 0; background: #f1f1f1; padding: 18px 18px 0; }
.subtabs { height: 47px; display: flex; border-bottom: 1px solid #e0e0e0; font: 700 14px/18px "Liberation Sans", Arial, sans-serif; letter-spacing: -.27px; color: #8f8f8f; }
.subtabs span { margin: 18px 13.500px 0; }
.subtabs .on { background: #fff; margin: 0; width: 100px; height: 47px; padding: 9px 0 0 13.500px; }
.panel { background: #fff; height: 829px; padding: 0 27px 0 14px; overflow: hidden; display: flow-root; }
h1 { margin: 9px 0 0; font-size: 36px; line-height: 48px; font-weight: 600; color: #a97d59; }
.trip { margin: 14px 0 0; font-size: 14px; line-height: 22px; color: #444; height: 22px; }
.trip b { font-weight: 600; font-size: 16px; color: #a97d59; margin-right: 2px; }
.total { margin: 9px 0 0; font-size: 13.500px; line-height: 22px; color: #555; }
.charts { display: flex; margin: 13px 0 0 137px; height: 172px; }
.chart { display: flex; flex: none; align-items: center; width: 529px; }
.chart svg { width: 172px; height: 172px; margin-right: 7.500px; }
.chart div { display: flex; flex-direction: column; align-items: center; white-space: nowrap; margin-bottom: 2px; }
.chart strong { font-size: 27px; line-height: 34px; font-weight: 600; margin-top: -2px; }
.chart small { font-size: 11px; line-height: 21px; font-weight: 600; color: #ccc; letter-spacing: -.1px; }
.green strong { color: #58ae22; }
.blue strong { color: #1598e2; }
.red strong { color: #d9001d; }
.second { margin: 35px 0 0 379px; }
.map { margin: 64px 0 0 13px; width: 1029px; height: 400px; border: 1px solid #d2d2d2; }
.map path { fill: #f4f4f4; stroke: #dcdcdc; stroke-width: 3; stroke-linejoin: round; }
.map .water path { fill: #fff; }

/* Taskbar */
.taskbar { height: 40px; flex: none; display: flex; border-top: 1px solid #303c4b; box-shadow: inset 0 1px #c6d6e8; background: linear-gradient(90deg, #8496ae 0, #8496ae 58px, #a8c1dd 60px, #a8c1dd 1060px, #8496ae 1094px); }
.task { width: 59px; height: 39px; margin-right: 3px; display: flex; align-items: center; justify-content: center; border: 1px solid transparent; }
.task svg { width: 32px; height: 32px; }
.task.start { width: 53px; margin-right: 6px; }
.task.start svg { width: 36px; height: 36px; }
.task.open { border-color: #5c6f87; border-radius: 3px; background: linear-gradient(135deg, #d1deec, #adc3dc); box-shadow: inset 0 0 0 1px #d9e5f2; }
.task.bright { background: linear-gradient(135deg, #eef3f9, #cfdeee); }
.dw { font: 600 15px "Open Sans", sans-serif; fill: #c6ef3c; }
.tray { margin-left: auto; display: flex; align-items: center; }
.tray svg { width: 90px; height: 20px; }
.clock { display: flex; flex-direction: column; align-items: center; width: 58px; margin: 0 8px 0 9px; font-size: 12px; line-height: 17px; color: #fff; letter-spacing: -.4px; }
.peek { width: 14px; height: 39px; border: 1px solid #3f4d60; background: linear-gradient(#a8b4c2, #5d6a7b 50%, #7b899c); box-shadow: inset 0 0 0 1px #8e9bad; }
```
